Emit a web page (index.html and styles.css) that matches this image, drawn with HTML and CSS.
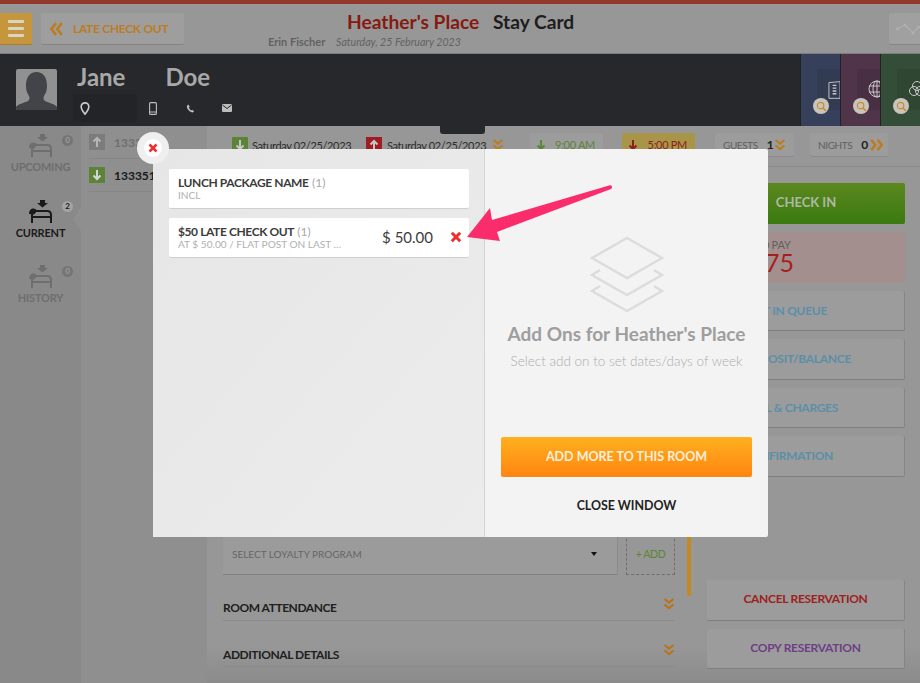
FILE: index.html
```html
<!DOCTYPE html>
<html lang="en">

<head>
    <meta charset="UTF-8">
    <meta name="viewport" content="width=device-width, initial-scale=1.0">
    <title>Stay Card</title>
    <link rel="stylesheet" href="styles.css">
</head>

<body>

    <svg class="icon-defs" width="0" height="0">
        <symbol id="bed" viewBox="0 0 24 24">
            <path d="M11 0h5v3h3l-5.500 4.500L8 3h3z" fill="currentColor"/>
            <path d="M3 23V15c0-2.500 1.500-4 4-4h11c2.500 0 4 1.500 4 4v8" fill="none" stroke="currentColor" stroke-width="2"/>
            <path d="M3 17h19" stroke="currentColor" stroke-width="2"/>
            <path d="M0 14c0-3 1.500-5.500 4-5.500s3.500 1 4 2.500L5 14.500z" fill="currentColor"/>
        </symbol>
        <symbol id="chev-down" viewBox="0 0 12 12">
            <path d="M1.500 1 6 4.500 10.500 1M1.500 6.500 6 10l4.500-3.500" fill="none" stroke="currentColor" stroke-width="2.200"/>
        </symbol>
        <symbol id="search" viewBox="0 0 12 12">
            <circle cx="5" cy="5" r="3.500" fill="none" stroke="currentColor" stroke-width="1.300"/>
            <path d="M7.500 7.500 11 11" stroke="currentColor" stroke-width="1.600"/>
        </symbol>
        <symbol id="cross" viewBox="0 0 12 12">
            <path d="M1.800 1.800l8.400 8.400M10.200 1.800l-8.400 8.400" stroke="currentColor" stroke-width="3"/>
        </symbol>
        <symbol id="arrow-down" viewBox="0 0 16 16">
            <path d="M8 3v9M4.500 8.500 8 12l3.500-3.500" fill="none" stroke="currentColor" stroke-width="2"/>
        </symbol>
    </svg>

    <header class="top-bar">
        <div class="menu-btn"><span></span><span></span><span></span></div>
        <div class="back-btn">
            <svg class="back-chev" viewBox="0 0 12 12"><path d="M6 1 2 6l4 5M11 1 7 6l4 5" fill="none" stroke="currentColor" stroke-width="2.200"/></svg>
            LATE CHECK OUT
        </div>
        <div class="title-block">
            <h1><span class="hotel">Heather's Place</span> Stay Card</h1>
            <p><b>Erin Fischer</b> <i>Saturday, 25 February 2023</i></p>
        </div>
        <div class="graph-btn">
            <svg viewBox="0 0 24 12" width="24" height="12">
                <path d="M1 6l8-4 8 8 6-6" fill="none" stroke="#b0b0b0" stroke-width="1.200"/>
                <circle cx="1.500" cy="6" r="1.500" fill="#b0b0b0"/>
                <circle cx="9" cy="2" r="1.500" fill="#b0b0b0"/>
                <circle cx="17" cy="10" r="1.500" fill="#b0b0b0"/>
                <circle cx="22.500" cy="4" r="1.500" fill="#b0b0b0"/>
            </svg>
        </div>
    </header>

    <section class="guest-bar">
        <div class="avatar">
            <svg viewBox="0 0 41 41" width="41" height="41">
                <path d="M0 41v-3c2-3 8-4 12-6 1.500-1 2-3 1-5-2-3-3-6-3-10C10 8 14 3 20.500 3S31 8 31 17c0 4-1 7-3 10-1 2-.5 4 1 5 4 2 10 3 12 6v3z" fill="#434449"/>
            </svg>
        </div>
        <div class="guest-info">
            <div class="guest-name"><span>Jane</span><span>Doe</span></div>
            <div class="guest-icons">
                <div class="pin-cell">
                    <svg viewBox="0 0 12 16" width="10" height="13"><path d="M6 1a4.700 4.700 0 0 0-4.700 4.700C1.300 9 6 15 6 15s4.700-6 4.700-9.300A4.700 4.700 0 0 0 6 1z" fill="none" stroke="#c9c9c9" stroke-width="2"/></svg>
                </div>
                <svg class="phone-icon" viewBox="0 0 8 13" width="8" height="13"><rect x=".6" y=".6" width="6.800" height="11.800" rx="1" fill="none" stroke="#bdbdbd" stroke-width="1.100"/><path d="M1 10h6" stroke="#bdbdbd"/></svg>
                <svg class="call-icon" viewBox="0 0 10 10" width="9" height="9"><path d="M2.500.5C1 1.500.5 3 1.500 5c1 2 3 4 6 4.500l1.500-1.500-2.200-1.500-1 .8C4.500 6.300 3.500 5 3.300 4l.9-1z" fill="#bdbdbd"/></svg>
                <svg class="mail-icon" viewBox="0 0 10 8" width="10" height="8"><rect width="10" height="8" rx="1" fill="#bdbdbd"/><path d="M.5 1 5 4.500 9.500 1" fill="none" stroke="#27282b"/></svg>
            </div>
        </div>
        <div class="guest-tabs">
            <div class="tab tab-blue">
                <svg class="tab-art" viewBox="0 0 14 20" width="13" height="20"><path d="M1 2l12-1v18H1z" fill="none" stroke="#c9c9c9"/><path d="M5 5h4M5 8h4M5 11h4M5 14h4" stroke="#c9c9c9" stroke-width="1.500"/></svg>
                <span class="lens"><svg width="12" height="12"><use href="#search"/></svg></span>
            </div>
            <div class="tab tab-purple">
                <svg class="tab-art" viewBox="0 0 18 18" width="18" height="18"><circle cx="9" cy="9" r="8" fill="none" stroke="#c9c9c9"/><ellipse cx="9" cy="9" rx="4" ry="8" fill="none" stroke="#c9c9c9"/><path d="M1 6h16M1 12h16M9 1v16" stroke="#c9c9c9"/></svg>
                <span class="lens"><svg width="12" height="12"><use href="#search"/></svg></span>
            </div>
            <div class="tab tab-green">
                <svg class="tab-art" viewBox="0 0 18 18" width="18" height="18"><circle cx="9" cy="6" r="4.500" fill="none" stroke="#c9c9c9"/><circle cx="6" cy="11" r="4.500" fill="none" stroke="#c9c9c9"/><circle cx="12" cy="11" r="4.500" fill="none" stroke="#c9c9c9"/></svg>
                <span class="lens"><svg width="12" height="12"><use href="#search"/></svg></span>
            </div>
        </div>
    </section>

    <main class="stay-layout">
        <nav class="side-nav">
            <div class="nav-item">
                <span class="count">0</span>
                <svg width="24" height="24"><use href="#bed"/></svg>
                UPCOMING
            </div>
            <div class="nav-item nav-current">
                <span class="count">2</span>
                <svg width="24" height="24"><use href="#bed"/></svg>
                CURRENT
            </div>
            <div class="nav-item">
                <span class="count">0</span>
                <svg width="24" height="24"><use href="#bed"/></svg>
                HISTORY
            </div>
        </nav>

        <aside class="res-list">
            <div class="res-row">
                <svg class="res-arrow res-up" width="16" height="16"><use href="#arrow-down"/></svg>
                <span class="res-num">133352</span>
            </div>
            <div class="res-row res-active">
                <svg class="res-arrow res-down" width="16" height="16"><use href="#arrow-down"/></svg>
                <span class="res-num">133351</span>
            </div>
        </aside>

        <section class="res-detail">
            <div class="date-bar">
                <svg class="date-box green-box" width="16" height="16"><use href="#arrow-down"/></svg>
                <span class="date-text">Saturday 02/25/2023</span>
                <svg class="date-box red-box" width="16" height="16"><use href="#arrow-down"/></svg>
                <span class="date-text">Saturday 02/25/2023</span>
                <svg class="mini-chev" width="12" height="12"><use href="#chev-down"/></svg>
                <span class="pill pill-time">
                    <svg width="16" height="16"><use href="#arrow-down"/></svg>
                    9:00 AM
                </span>
                <span class="pill pill-late">
                    <svg width="16" height="16"><use href="#arrow-down"/></svg>
                    5:00 PM
                </span>
                <span class="pill pill-guests">GUESTS <b>1</b> <svg class="pill-chev" width="12" height="12"><use href="#chev-down"/></svg></span>
                <span class="pill pill-nights">NIGHTS <b>0</b> <svg class="pill-chev chev-right" width="12" height="12"><use href="#chev-down"/></svg></span>
            </div>

            <div class="detail-body">
                <div class="detail-main">
                    <div class="loyalty-row">
                        <div class="loyalty-select">SELECT LOYALTY PROGRAM <span class="caret"></span></div>
                        <div class="loyalty-add">+ ADD</div>
                    </div>
                    <div class="fold-row">ROOM ATTENDANCE <svg width="12" height="12"><use href="#chev-down"/></svg></div>
                    <div class="fold-row">ADDITIONAL DETAILS <svg width="12" height="12"><use href="#chev-down"/></svg></div>
                </div>
                <div class="scroll-thumb"></div>
                <div class="detail-actions">
                    <div class="action action-checkin">CHECK IN</div>
                    <div class="pay-box">
                        <small>TO PAY</small>
                        <strong>$ 175</strong>
                    </div>
                    <div class="action action-blue action-queue">PUT IN QUEUE</div>
                    <div class="action action-blue action-deposit">DEPOSIT/BALANCE</div>
                    <div class="action action-blue action-bill">BILL &amp; CHARGES</div>
                    <div class="action action-blue action-confirm">CONFIRMATION</div>
                    <div class="action action-red">CANCEL RESERVATION</div>
                    <div class="action action-purple">COPY RESERVATION</div>
                </div>
            </div>
        </section>
    </main>

    <div class="dark-handle"></div>

    <div class="modal">
        <div class="modal-close">
            <span><svg width="12" height="12"><use href="#cross"/></svg></span>
        </div>
        <div class="modal-left">
            <div class="addon-card">
                <div class="addon-text">
                    <h3>LUNCH PACKAGE NAME <em>(1)</em></h3>
                    <p>INCL</p>
                </div>
            </div>
            <div class="addon-card">
                <div class="addon-text">
                    <h3>$50 LATE CHECK OUT <em>(1)</em></h3>
                    <p>AT $ 50.00 / FLAT POST ON LAST …</p>
                </div>
                <div class="addon-price">$ 50.00</div>
                <svg class="addon-remove" width="12" height="12"><use href="#cross"/></svg>
            </div>
        </div>
        <div class="modal-right">
            <svg class="layers" viewBox="0 0 76 76" width="76" height="76">
                <path d="M38 2 73 22 38 42 3 22z" fill="none" stroke="#dcdcdc" stroke-width="2.500"/>
                <path d="M11 34 3 39 38 59 73 39 65 34" fill="none" stroke="#dcdcdc" stroke-width="2.500"/>
                <path d="M11 50 3 55 38 75 73 55 65 50" fill="none" stroke="#dcdcdc" stroke-width="2.500"/>
            </svg>
            <h2>Add Ons for Heather's Place</h2>
            <p>Select add on to set dates/days of week</p>
            <div class="add-more">ADD MORE TO THIS ROOM</div>
            <div class="close-window">CLOSE WINDOW</div>
        </div>
    </div>

    <!-- callout arrow, page coords minus 460,180 -->
    <svg class="callout" viewBox="0 0 160 70" width="160" height="70">
        <path d="M7 57 30 28 32 40 149 5.500C152 4.500 153 8 151 9L37 52 40 61z" fill="#fb2c6c"/>
    </svg>

</body>

</html>
```

FILE: styles.css
```css
* {
    box-sizing: border-box;
    margin: 0;
    padding: 0;
}

html,
body {
    height: 100%;
    overflow: hidden;
}

body {
    position: relative;
    display: flex;
    flex-direction: column;
    background-color: #979797;
    font-family: 'Lato', sans-serif;
    color: #222;
}

svg {
    flex: none;
}

.icon-defs {
    position: absolute;
}

/* Top bar */
.top-bar {
    display: flex;
    align-items: flex-start;
    flex: 0 0 54px;
    padding-top: 9px;
    background-color: #979797;
    border-top: 4px solid #93392c;
    border-bottom: 1px solid #7d7d7d;
}

.menu-btn {
    display: flex;
    flex-direction: column;
    justify-content: center;
    gap: 4px;
    width: 32px;
    height: 32px;
    padding: 0 8px;
    background-color: #c6963c;
    border-bottom: 1px solid #a87d2c;
    border-radius: 0 2px 2px 0;
}

.menu-btn span {
    height: 3px;
    background-color: #d9d4c5;
    border-radius: 1px;
}

.back-btn {
    display: flex;
    align-items: center;
    gap: 10px;
    width: 143px;
    height: 32px;
    margin-left: 9px;
    padding-left: 8px;
    font-size: 12px;
    font-weight: 700;
    letter-spacing: -0.3px;
    color: #bd7c1f;
    background-color: #9e9e9e;
    border-bottom: 1px solid #858585;
    border-radius: 2px;
}

.back-chev {
    width: 14px;
    height: 14px;
}

.title-block {
    flex: 1;
    margin-left: 84px;
    margin-top: -3px;
}

.title-block h1 {
    padding-left: 79px;
    font-size: 19.2px;
    font-weight: 700;
    line-height: 24px;
    color: #1d1d1d;
}

.hotel {
    margin-right: 9px;
    color: #861a10;
}

.title-block p {
    margin-top: 1px;
    font-size: 10.6px;
    line-height: 13px;
    color: #626262;
}

.title-block b {
    margin-right: 8px;
    font-size: 11px;
}

.graph-btn {
    display: flex;
    align-items: center;
    justify-content: center;
    width: 31px;
    height: 32px;
    padding-left: 6px;
    background-color: #a0a0a0;
    border-bottom: 1px solid #858585;
    border-radius: 2px 0 0 2px;
}

/* Guest bar */
.guest-bar {
    display: flex;
    flex: 0 0 72px;
    background-color: #27282b;
}

.avatar {
    width: 41px;
    height: 41px;
    margin: 15px 0 0 16px;
    background-color: #919191;
    border-radius: 2px;
    overflow: hidden;
}

.guest-info {
    flex: 1;
    margin-left: 16px;
}

.guest-name {
    display: flex;
    gap: 40px;
    padding: 9px 0 0 4px;
    font-size: 24px;
    font-weight: 700;
    line-height: 28px;
    color: #a8a8a8;
}

.guest-icons {
    display: flex;
    align-items: center;
    height: 28px;
    margin-top: 3px;
}

.pin-cell {
    display: flex;
    align-items: center;
    width: 64px;
    height: 28px;
    padding-left: 7px;
    background-color: #232427;
}

.phone-icon {
    margin-left: 12px;
}

.call-icon {
    margin-left: 29px;
}

.mail-icon {
    margin-left: 27px;
}

.guest-tabs {
    display: flex;
}

.tab {
    position: relative;
    width: 40px;
    overflow: hidden;
    border-left: 1px solid #222;
}

.tab::before {
    content: "";
    position: absolute;
    left: 16px;
    top: 15px;
    width: 24px;
    height: 41px;
    background-color: rgba(0, 0, 0, 0.08);
}

.tab-blue {
    background-color: #37405a;
}

.tab-purple {
    background-color: #50344a;
}

.tab-green {
    background-color: #334d38;
}

.tab-art {
    position: absolute;
    left: 27px;
    top: 26px;
}

.lens {
    position: absolute;
    left: 12px;
    top: 44px;
    display: flex;
    align-items: center;
    justify-content: center;
    width: 16px;
    height: 16px;
    color: #c98a30;
    background-color: #c9c5bd;
    border-radius: 50%;
}

.lens svg {
    width: 11px;
    height: 11px;
}

/* Main area */
.stay-layout {
    display: flex;
    flex: 1;
    min-height: 0;
}

.side-nav {
    width: 81px;
    padding-top: 8px;
    background-color: #898989;
}

.nav-item {
    position: relative;
    display: flex;
    flex-direction: column;
    align-items: center;
    height: 65.5px;
    font-size: 11px;
    font-weight: 700;
    letter-spacing: -0.2px;
    line-height: 17px;
    color: #6e6e6e;
}

.nav-item svg {
    display: block;
    margin-left: 1px;
}

.nav-current {
    color: #1a1a1a;
}

.nav-current::after {
    content: "";
    position: absolute;
    right: 0;
    top: 7px;
    border: solid transparent;
    border-width: 12px 8px 12px 0;
    border-right-color: #8f8f8f;
}

.count {
    position: absolute;
    left: 62px;
    top: 1px;
    width: 11px;
    height: 11px;
    font-size: 8px;
    line-height: 11px;
    text-align: center;
    color: #9c9c9c;
    background-color: #757575;
    border-radius: 50%;
}

.nav-current .count {
    color: #1a1a1a;
    background-color: #a3a3a3;
}

.res-list {
    width: 126px;
    padding: 0 8px;
    background-color: #8f8f8f;
}

.res-row {
    display: flex;
    align-items: center;
    gap: 9px;
    height: 33px;
    border-bottom: 1px solid #858585;
}

.res-num {
    font-size: 12px;
    font-weight: 700;
    color: #6f6f6f;
}

.res-active .res-num {
    color: #1a1a1a;
}

.res-arrow {
    color: #b5b5b5;
    background-color: #7c7c7c;
}

.res-up {
    transform: rotate(180deg);
}

.res-down {
    color: #d5d5d5;
    background-color: #5b8436;
}

.res-detail {
    flex: 1;
    min-width: 0;
    background-color: #979797;
    background-image: linear-gradient(to bottom, transparent 520px, #8b8b8b 100%);
}

.date-bar {
    display: flex;
    align-items: center;
    height: 41px;
    padding: 0 0 2px 25px;
    font-size: 11px;
    letter-spacing: -0.35px;
    border-bottom: 1px solid #8a8a8a;
    white-space: nowrap;
}

.date-box {
    color: #c5c5c5;
}

.green-box {
    background-color: #5b8436;
}

.red-box {
    margin-left: 16px;
    background-color: #9e1c22;
    transform: rotate(180deg);
}

.date-text {
    width: 98px;
    margin-left: 4px;
    color: #2b2b2b;
}

.red-box + .date-text {
    margin-left: 5px;
}

.mini-chev {
    margin-left: 7px;
    color: #bd7c1f;
}

.pill {
    display: flex;
    align-items: center;
    height: 24px;
    padding: 0 8px;
    border-radius: 2px;
    font-size: 10px;
    letter-spacing: -0.4px;
    color: #5e5e5e;
    background-color: #9c9c9c;
    border-bottom: 1px solid #8a8a8a;
}

.pill b {
    margin-left: 9px;
    font-size: 12px;
    font-weight: 700;
    letter-spacing: 0;
    color: #222;
}

.pill-chev {
    margin-left: auto;
    color: #bd7c1f;
}

.pill-time,
.pill-late {
    justify-content: space-between;
    width: 73px;
    padding-left: 3px;
    font-size: 11px;
    letter-spacing: -0.3px;
}

.pill-time {
    margin-left: 26px;
    color: #5b8436;
}

.pill-late {
    margin-left: 19px;
    color: #8f1e1e;
    background-color: #a89548;
}

.pill-guests {
    width: 79px;
    margin-left: 20px;
}

.pill-nights {
    width: 78px;
    margin-left: 16px;
    padding-right: 4px;
}

.chev-right {
    width: 14px;
    height: 14px;
    transform: rotate(-90deg);
}

.detail-body {
    display: flex;
}

.detail-main {
    width: 452px;
    margin-left: 16px;
    padding-top: 367px;
}

.loyalty-row {
    display: flex;
    gap: 8px;
    height: 41px;
}

.loyalty-select {
    display: flex;
    align-items: center;
    justify-content: space-between;
    flex: 1;
    padding: 0 20px 1px 9px;
    font-size: 10px;
    color: #666;
    background-color: #9b9b9b;
    border-bottom: 1px solid #808080;
    border-right: 1px solid #8a8a8a;
}

.caret {
    border: 3px solid transparent;
    border-top: 4px solid #111;
    border-bottom: 0;
}

.loyalty-add {
    width: 49px;
    font-size: 10.5px;
    letter-spacing: -0.4px;
    line-height: 38px;
    text-align: center;
    color: #5b8436;
    border: 1px dashed #6f6f6f;
}

.fold-row {
    display: flex;
    justify-content: space-between;
    align-items: flex-start;
    height: 46px;
    padding: 24px 0 0;
    font-size: 12px;
    font-weight: 700;
    letter-spacing: -0.45px;
    line-height: 18px;
    color: #202020;
    border-bottom: 1px solid #8a8a8a;
}

.fold-row + .fold-row {
    padding-top: 25px;
}

.fold-row svg {
    margin-top: -1px;
    color: #b8741a;
}

.fold-row + .fold-row svg {
    margin-top: -2px;
}

.scroll-thumb {
    width: 4px;
    height: 429px;
    margin-left: 12px;
    background-color: #c48a22;
    border-radius: 0 0 2px 2px;
}

.detail-actions {
    display: flex;
    flex-direction: column;
    gap: 8px;
    width: 198px;
    margin: 16px 0 0 16px;
}

.action {
    height: 40.6px;
    font-size: 12px;
    font-weight: 700;
    letter-spacing: -0.3px;
    line-height: 39px;
    text-align: center;
    background-color: #9c9c9c;
    border-right: 1px solid #858585;
    border-bottom: 1px solid #7f7f7f;
    border-radius: 2px;
}

.action-checkin {
    font-size: 13px;
    letter-spacing: 0;
    color: #aeb9a4;
    background-image: linear-gradient(#5b881f, #3a7a10);
    border: 0;
}

.action-blue {
    text-align: right;
    color: #5b8fa8;
}

.action-queue {
    padding-right: 77px;
}

.action-deposit {
    padding-right: 53px;
}

.action-bill {
    padding-right: 66px;
}

.action-confirm {
    padding-right: 71px;
}

.action-red {
    margin-top: 95px;
    line-height: 38px;
    color: #9e2020;
}

.action-purple {
    line-height: 38px;
    color: #6e3f86;
}

.pay-box {
    height: 51px;
    padding: 6px 111px 0 0;
    text-align: right;
    background-color: #a38f8d;
    border-radius: 2px;
}

.pay-box small {
    display: block;
    padding-right: 3px;
    font-size: 11px;
    word-spacing: -1px;
    line-height: 13px;
    color: #5f5f5f;
}

.pay-box strong {
    display: block;
    font-size: 25px;
    font-weight: 400;
    line-height: 23px;
    color: #a61f1f;
}

/* Overlay pieces */
.dark-handle {
    position: absolute;
    left: 440px;
    top: 126px;
    width: 45px;
    height: 8px;
    background-color: #27282b;
    border-radius: 0 0 3px 3px;
}

.modal {
    position: absolute;
    left: 153px;
    top: 149px;
    display: flex;
    width: 615px;
    height: 388px;
    background-color: #f3f3f3;
    border-radius: 2px;
}

.modal-close {
    position: absolute;
    left: -16px;
    top: -17px;
    display: flex;
    align-items: center;
    justify-content: center;
    width: 32px;
    height: 32px;
    background-color: #efefef;
    border-radius: 50%;
}

.modal-close span {
    display: flex;
    align-items: center;
    justify-content: center;
    width: 18px;
    height: 18px;
    color: #ee2f2f;
    background-color: #fff;
    border-radius: 50%;
}

.modal-close svg {
    width: 10px;
    height: 10px;
}

.modal-left {
    display: flex;
    flex-direction: column;
    gap: 9px;
    width: 332px;
    padding: 20px 15px 0 16px;
    background-image: linear-gradient(to bottom right, #e6e6e6, #ececec);
    border-right: 1px solid #d4d4d4;
}

.addon-card {
    display: flex;
    align-items: center;
    height: 40px;
    padding: 0 7px 1px 9px;
    background-color: #fff;
    border-bottom: 1px solid #cfcfcf;
    border-radius: 2px;
}

.addon-text {
    flex: 1;
    min-width: 0;
}

.addon-text h3 {
    font-size: 12px;
    font-weight: 700;
    letter-spacing: -0.4px;
    line-height: 13px;
    color: #3c3c3c;
}

.addon-text em {
    margin-left: 1px;
    font-weight: 400;
    font-style: normal;
    letter-spacing: 0;
    color: #a8a8a8;
}

.addon-text p {
    font-size: 10.1px;
    line-height: 12px;
    color: #b0b0b0;
    white-space: nowrap;
}

.addon-price {
    margin-right: 17px;
    font-size: 15px;
    color: #3c3c3c;
}

.addon-remove {
    color: #ee2f2f;
}

.modal-right {
    display: flex;
    flex-direction: column;
    align-items: center;
    flex: 1;
    padding: 87px 16px 0;
}

.modal-right h2 {
    margin-top: 10px;
    font-size: 19px;
    font-weight: 700;
    line-height: 24px;
    color: #9e9e9e;
}

.modal-right p {
    margin-top: 6px;
    font-size: 13.5px;
    font-weight: 300;
    line-height: 18px;
    color: #adadad;
}

.add-more {
    width: 251px;
    height: 40px;
    margin-top: 67px;
    font-size: 12.5px;
    font-weight: 700;
    line-height: 40px;
    text-align: center;
    color: #fbeedd;
    background-image: linear-gradient(#ffb01f, #ff8510);
    border-radius: 2px;
}

.close-window {
    margin-top: 20px;
    font-size: 12.4px;
    font-weight: 700;
    line-height: 18px;
    color: #222;
}

.callout {
    position: absolute;
    left: 460px;
    top: 180px;
}
```
